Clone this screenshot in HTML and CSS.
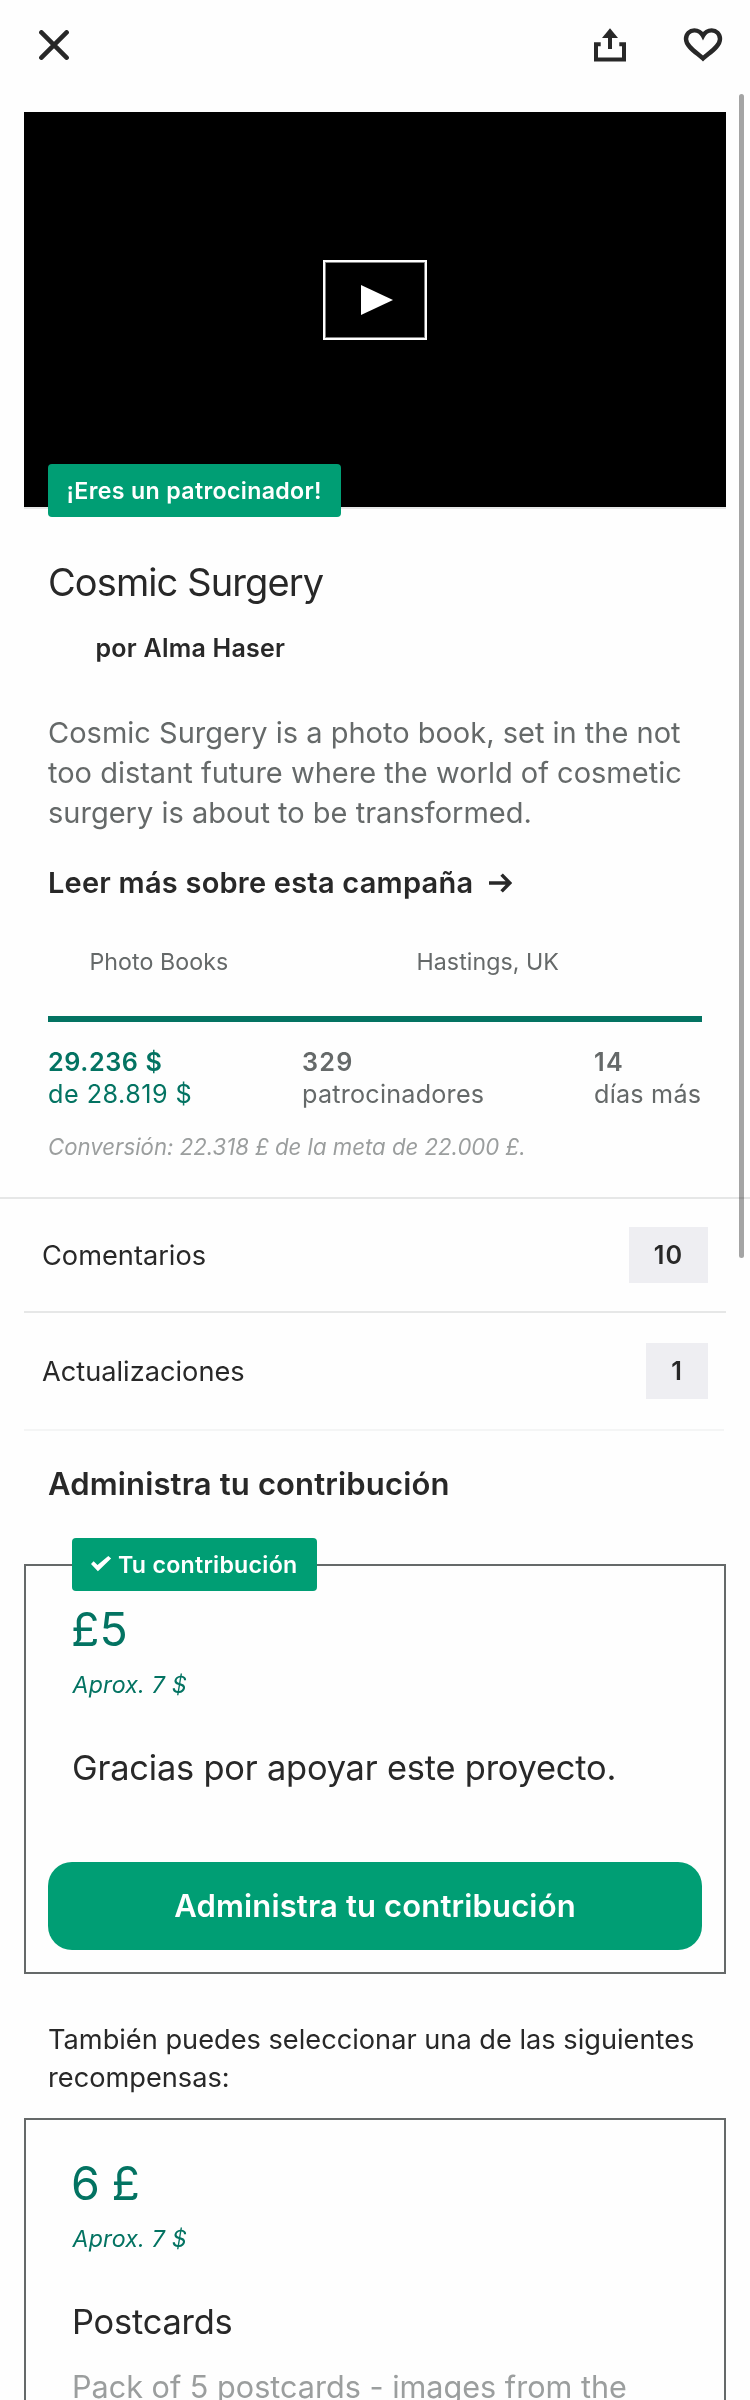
FILE: index.html
```html
<!DOCTYPE html>
<html lang="es">
<head>
<meta charset="utf-8">
<title>Cosmic Surgery</title>
<link rel="stylesheet" href="styles.css">
</head>
<body>
<div class="page">
  <header class="topbar">
    <svg class="icon icon-close" width="30" height="30" viewBox="0 0 30 30"><path d="M2.4 2.4 27.6 27.6M27.6 2.4 2.4 27.6"/></svg>
    <svg class="icon icon-share" width="32" height="34" viewBox="0 0 32 34"><path class="line" d="M6.7 16.3H2V31.6H30V16.3H25.3M16 9V21"/><path class="fill" d="M16 .2 24 10H8Z"/></svg>
    <svg class="icon icon-heart" width="40" height="36" viewBox="0 0 40 36"><path d="M20 30.500C13.500 24.500 3 18.500 3 11C3 5.800 6.800 2.400 11.300 2.400C15 2.400 18.200 4.500 20 7.800C21.800 4.500 25 2.400 28.700 2.400C33.200 2.400 37 5.800 37 11C37 18.500 26.500 24.500 20 30.500Z"/></svg>
  </header>

  <section class="video">
    <div class="play"><svg width="32" height="30" viewBox="0 0 32 30"><path d="M0 0 32 15 0 30Z"/></svg></div>
    <span class="badge badge-backer">¡Eres un patrocinador!</span>
  </section>

  <section class="summary">
    <h1 class="title">Cosmic Surgery</h1>
    <p class="author">por Alma Haser</p>
    <p class="blurb">Cosmic Surgery is a photo book, set in the not<br>too distant future where the world of cosmetic<br>surgery is about to be transformed.</p>
    <a class="more">Leer más sobre esta campaña<svg width="23" height="20" viewBox="0 0 23 20"><path d="M0 10H20.500M12.600 1.600 20.800 10 12.600 18.400"/></svg></a>
    <div class="meta"><span>Photo Books</span><span>Hastings, UK</span></div>
    <div class="progress"></div>
    <div class="stats">
      <div class="stat stat-pledged"><b class="amount">29.236 $</b><span class="goal">de 28.819 $</span></div>
      <div class="stat"><b class="count">329</b><span>patrocinadores</span></div>
      <div class="stat"><b class="count">14</b><span>días más</span></div>
    </div>
    <p class="conversion">Conversión: 22.318 £ de la meta de 22.000 £.</p>
  </section>

  <nav class="links">
    <div class="row"><span>Comentarios</span><b class="number">10</b></div>
    <div class="row row-last"><span>Actualizaciones</span><b class="number number-single">1</b></div>
  </nav>

  <h2 class="heading">Administra tu contribución</h2>

  <article class="card card-pledge">
    <span class="badge badge-pledge"><svg width="21" height="16" viewBox="0 0 21 16"><path d="M0 8 2.600 5.200 6.500 9.100 17.300 0 20.100 2.500 6.900 15.300Z"/></svg>Tu contribución</span>
    <div class="price">£5</div>
    <div class="approx">Aprox. 7 $</div>
    <div class="reward">Gracias por apoyar este proyecto.</div>
    <button class="button">Administra tu contribución</button>
  </article>

  <p class="note">También puedes seleccionar una de las siguientes<br>recompensas:</p>

  <article class="card card-reward">
    <div class="price price-spaced">6 £</div>
    <div class="approx">Aprox. 7 $</div>
    <div class="reward">Postcards</div>
    <div class="details">Pack of 5 postcards - images from the</div>
  </article>
  <div class="scrollbar"></div>
</div>
</body>
</html>
```

FILE: styles.css
```css
* { box-sizing: border-box; }
body { margin: 0; background: #fefefe; color: #282828; font-family: "Inter", "Liberation Sans", sans-serif; }
h1, h2, p { margin: 0; font-weight: 400; }
svg { display: block; flex: none; }
.page { position: relative; width: 750px; height: 2400px; overflow: hidden; white-space: nowrap; }

.topbar { display: flex; align-items: flex-start; height: 112px; padding: 28px 27px 0 39px; }
.icon path { fill: none; stroke: #282828; stroke-width: 4; }
.icon-close { margin-top: 2px; }
.icon-close path { stroke-width: 4.6; stroke-linecap: round; }
.icon-share { margin-left: auto; }
.icon-share .fill { fill: #282828; stroke: none; }
.icon-heart { margin-left: 57px; }
.icon-heart path { stroke-width: 4.4; }

.video { position: relative; display: flex; justify-content: center; height: 397px; margin: 0 24px; padding-top: 148px; background: #000; border-bottom: 2px solid #e6e7e7; }
.play { display: flex; align-items: center; justify-content: center; width: 104px; height: 80px; padding-left: 4px; border: 2px solid #fff; box-shadow: inset 0 0 0 1px #808080; }
.play path { fill: #fff; }

.badge { position: absolute; display: flex; align-items: center; height: 53px; border-radius: 4px; background: #009e74; color: #fff; font-size: 23.2px; font-weight: 600; }
.badge-backer { left: 24px; top: 352px; width: 293px; padding-left: 18.500px; letter-spacing: .334px; }

.summary { padding: 49px 48px 0; }
.title { font-size: 38px; line-height: 48px; letter-spacing: -.9px; }
.author { margin-top: 25.500px; padding-left: 47.500px; font-size: 25px; font-weight: 600; line-height: 32px; letter-spacing: .24px; }
.blurb { margin-top: 49.500px; color: #656969; font-size: 29px; line-height: 40px; }
.more { display: flex; align-items: center; margin-top: 30px; font-size: 29px; font-weight: 600; line-height: 40px; letter-spacing: .22px; }
.more svg { margin-left: 16px; }
.more path { fill: none; stroke: #282828; stroke-width: 3.500; }
.meta { display: grid; grid-template-columns: 327px auto; margin-top: 43px; padding-left: 41.500px; color: #656969; font-size: 23.2px; line-height: 32px; letter-spacing: .05px; }
.progress { height: 6px; margin-top: 38px; background: #037362; }
.stats { display: grid; grid-template-columns: 254px 292px auto; margin-top: 23.500px; color: #656969; font-size: 25.2px; line-height: 32px; letter-spacing: .215px; }
.stat { display: flex; flex-direction: column; }
.stat b { font-weight: 600; }
.stat-pledged { color: #037362; }
.amount { letter-spacing: .584px; }
.goal { letter-spacing: .48px; }
.count { letter-spacing: 1.300px; }
.conversion { margin-top: 21px; color: #9b9e9e; font-size: 22.2px; font-style: italic; line-height: 32px; }

.links { margin-top: 34.500px; border-top: 2px solid #e6e7e7; }
.row { display: flex; align-items: center; justify-content: space-between; height: 114px; margin: 0 24px; padding: 0 18px; border-bottom: 2px solid #e6e7e7; font-size: 27.2px; }
.row-last { height: 118px; margin-right: 26px; padding-right: 16px; border-color: #f4f5f5; }
.number { display: flex; align-items: center; justify-content: center; width: 79px; height: 56px; background: #eeeef2; font-size: 25.2px; font-weight: 600; letter-spacing: 1px; }
.number-single { width: 62px; }

.heading { margin-top: 32.500px; padding-left: 48px; font-size: 31px; font-weight: 600; line-height: 40px; letter-spacing: .144px; }

.card { position: relative; margin: 0 24px; border: 2px solid #656969; }
.card-pledge { height: 410px; margin-top: 60.500px; padding: 35px 22px 0; }
.card-reward { height: 600px; margin-top: 21px; padding: 35px 22px 0; }
.badge-pledge { left: 46px; top: -28px; width: 245px; padding-left: 18.500px; letter-spacing: .25px; }
.badge-pledge svg { margin: -2px 6.500px 0 0; }
.badge-pledge path { fill: #fff; }
.price { padding-left: 23px; color: #037362; font-size: 46.500px; line-height: 56px; }
.price-spaced { word-spacing: -1.500px; }
.approx { margin-top: 11.500px; padding-left: 24.500px; color: #037362; font-size: 23.2px; font-style: italic; line-height: 32px; letter-spacing: .2px; }
.reward { margin-top: 43.500px; padding-left: 24px; font-size: 34.400px; line-height: 48px; letter-spacing: -.2px; }
.button { display: block; width: 654px; height: 88px; margin-top: 70px; padding: 0; border: 0; border-radius: 24px; background: #009e74; color: #fff; font: 600 31px/88px "Inter", sans-serif; letter-spacing: .144px; }

.note { margin-top: 47px; padding-left: 48px; font-size: 27.2px; line-height: 38px; }
.details { margin-top: 20.500px; padding-left: 24px; color: #9b9e9e; font-size: 30.600px; line-height: 40px; }

.scrollbar { position: absolute; left: 739px; top: 94px; width: 5px; height: 1164px; border-radius: 3px; background: #a5a5a5; mix-blend-mode: multiply; }
```
